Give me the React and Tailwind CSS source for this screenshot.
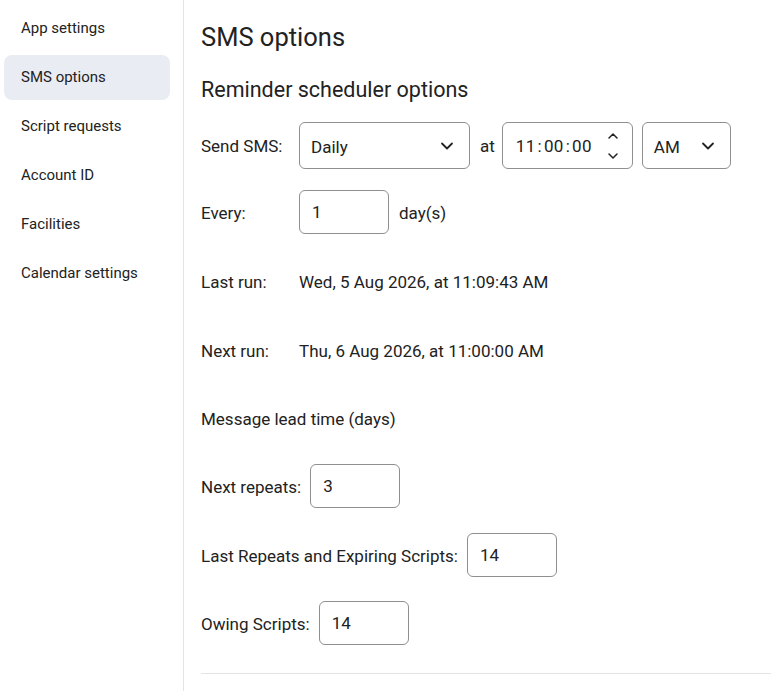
import React from 'react';

const NAV = ['App settings', 'SMS options', 'Script requests', 'Account ID', 'Facilities', 'Calendar settings'];

function Chevron() {
    return (
        <svg width="16" height="16" viewBox="0 0 16 16" fill="none" stroke="#222" strokeWidth="1.8" strokeLinecap="round" strokeLinejoin="round">
            <path d="M3 5.5l5 5 5-5" />
        </svg>
    );
}

function Box({ value }) {
    return (
        <div className="h-[44px] w-[90px] border border-[#8f8f8f] rounded-md flex items-center px-[12px] pt-[2px] text-[#222]">
            {value}
        </div>
    );
}

export default function App() {
    return (
        <div className="flex min-h-[691px] bg-white text-[#222]" style={{ fontFamily: 'Roboto, "Noto Sans", sans-serif' }}>
            {/* Sidebar */}
            <aside className="w-[184px] shrink-0 border-r border-[#e4e4e7] pt-[6px]">
                {NAV.map(item => (
                    <div
                        key={item}
                        className={`ml-[4px] mr-[13px] h-[45px] mb-[4px] rounded-lg flex items-center pl-[17px] text-[15px] ${item === 'SMS options' ? 'bg-[#eaecf4]' : ''}`}
                    >
                        {item}
                    </div>
                ))}
            </aside>

            {/* Main */}
            <main className="flex-1 pl-[17px] pt-[21px] text-[17px]">
                <h1 className="text-[25.5px] leading-[32px]">SMS options</h1>
                <h2 className="text-[21.5px] leading-[28px] mt-[23px]">Reminder scheduler options</h2>

                <div className="flex items-center mt-[18px]">
                    <span className="w-[98px] pt-[3px]">Send SMS:</span>
                    <div className="h-[47px] w-[171px] border border-[#8f8f8f] rounded-md flex items-center justify-between pl-[11px] pr-[14px]">
                        <span className="pt-[4px]">Daily</span>
                        <Chevron />
                    </div>
                    <span className="ml-[10px] mr-[7px] pt-[3px]">at</span>
                    <div className="h-[47px] w-[131px] border border-[#8f8f8f] rounded-md flex items-center justify-between pl-[13px] pr-[12px]">
                        <span className="tracking-[0.3px] pt-[2px]">11<span className="mx-[2px]">:</span>00<span className="mx-[2px]">:</span>00</span>
                        <svg width="14" height="34" viewBox="0 0 14 34" fill="none" stroke="#222" strokeWidth="1.5" strokeLinecap="round" strokeLinejoin="round">
                            <path d="M3 9l4-4 4 4" />
                            <path d="M3 25l4 4 4-4" />
                        </svg>
                    </div>
                    <div className="ml-[9px] h-[47px] w-[89px] border border-[#8f8f8f] rounded-md flex items-center justify-between pl-[11px] pr-[14px]">
                        <span className="pt-[4px]">AM</span>
                        <Chevron />
                    </div>
                </div>

                <div className="flex items-center mt-[21px]">
                    <span className="w-[98px] pt-[3px]">Every:</span>
                    <Box value="1" />
                    <span className="ml-[10px] pt-[3px]">day(s)</span>
                </div>

                <div className="flex items-center mt-[35px] h-[24px] pt-[3px]">
                    <span className="w-[98px]">Last run:</span>
                    <span>Wed, 5 Aug 2026, at 11:09:43 AM</span>
                </div>

                <div className="flex items-center mt-[45px] h-[24px] pt-[3px]">
                    <span className="w-[98px]">Next run:</span>
                    <span>Thu, 6 Aug 2026, at 11:00:00 AM</span>
                </div>

                <div className="mt-[44px] h-[24px] pt-[3px] flex items-center">Message lead time (days)</div>

                <div className="flex items-center mt-[34px]">
                    <span className="mr-[9px] pt-[3px]">Next repeats:</span>
                    <Box value="3" />
                </div>

                <div className="flex items-center mt-[25px]">
                    <span className="mr-[9px] pt-[3px]">Last Repeats and Expiring Scripts:</span>
                    <Box value="14" />
                </div>

                <div className="flex items-center mt-[24px]">
                    <span className="mr-[9px] pt-[3px]">Owing Scripts:</span>
                    <Box value="14" />
                </div>

                <div className="mt-[28px] border-t border-[#e4e4e7]" />
            </main>
        </div>
    );
}
